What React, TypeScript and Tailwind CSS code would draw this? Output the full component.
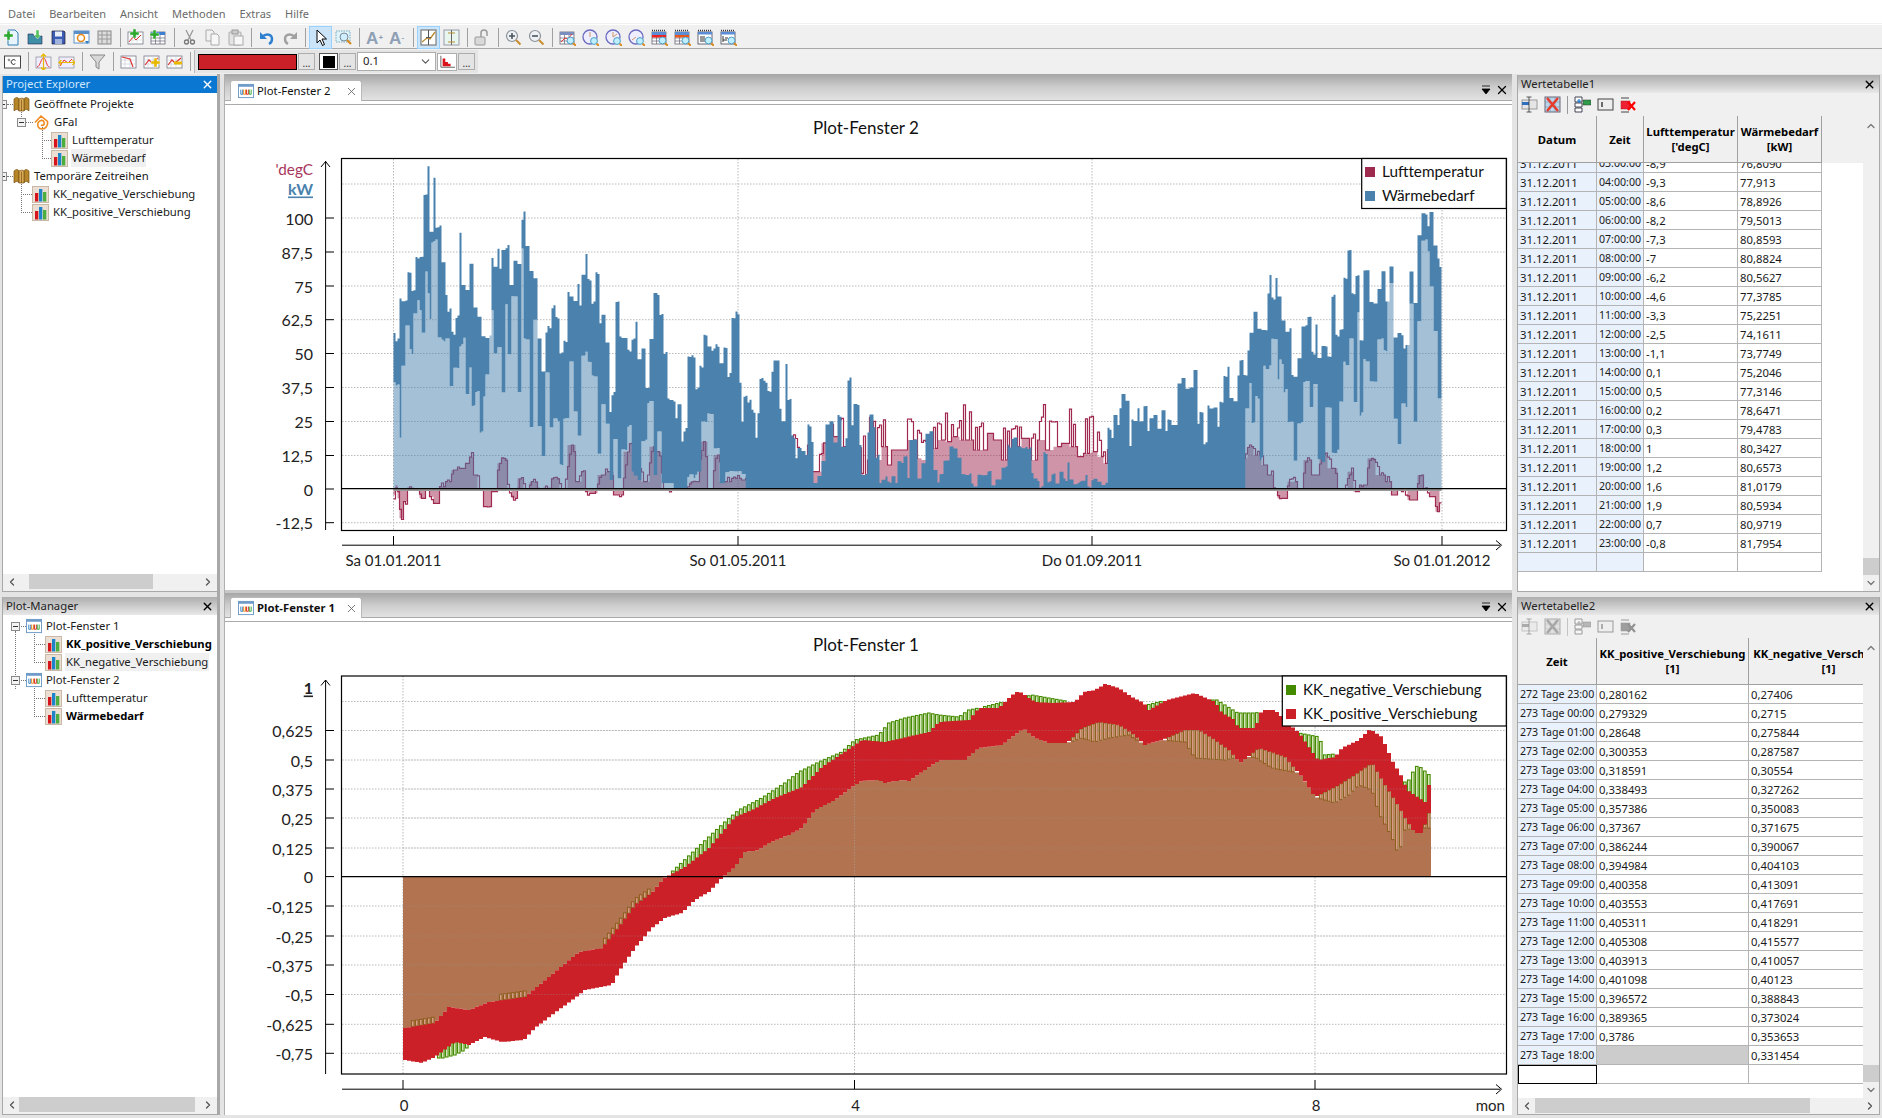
import React from "react";
import { ChevronUp, ChevronDown, ChevronLeft, ChevronRight, X } from "lucide-react";

/* ---------- chart data helpers ---------- */
const interp = (p: number[], x: number) => {
  if (x <= p[0]) return p[1];
  for (let i = 2; i < p.length; i += 2) {
    if (x <= p[i]) {
      const t = (x - p[i - 2]) / (p[i] - p[i - 2] || 1);
      return p[i - 1] + t * (p[i + 1] - p[i - 1]);
    }
  }
  return p[p.length - 1];
};
const nearest = (p: number[], x: number) => {
  if (x <= p[0]) return p[1];
  for (let i = 2; i < p.length; i += 2) {
    if (x <= p[i]) return x - p[i - 2] < p[i] - x ? p[i - 1] : p[i + 1];
  }
  return p[p.length - 1];
};
const rnd = (i: number) => {
  const s = Math.sin(i * 127.1 + 311.7) * 43758.5453;
  return s - Math.floor(s);
};
const zm = (z: number[], ox: number, oy: number) => z.map((v, i) => (i % 2 === 0 ? ox + v / 3 : oy + v / 3));
const join = (...segs: number[][]) => {
  const out: number[] = [];
  let last = -Infinity;
  segs.forEach((s) => {
    for (let i = 0; i < s.length; i += 2) {
      if (s[i] > last) {
        out.push(s[i], s[i + 1]);
        last = s[i];
      }
    }
  });
  return out;
};
const stepLine = (xs: number[], ys: number[], w: number) => {
  let d = `M${xs[0]} ${ys[0].toFixed(1)}`;
  xs.forEach((x, i) => {
    d += `V${ys[i].toFixed(1)}H${x + w}`;
  });
  return d;
};
const stepFill = (xs: number[], ys: number[], w: number, base: number) =>
  `M${xs[0]} ${base}` + stepLine(xs, ys, w).replace(/^M[^V]*/, "") + `V${base}Z`;
const stepBand = (xs: number[], a: number[], b: number[], w: number) => {
  let d = `M${xs[0]} ${a[0].toFixed(1)}`;
  xs.forEach((x, i) => {
    d += `V${a[i].toFixed(1)}H${x + w}`;
  });
  for (let i = xs.length - 1; i >= 0; i--) {
    d += `V${b[i].toFixed(1)}H${xs[i]}`;
  }
  return d + "Z";
};

/* ---------- Plot-Fenster 2 data ---------- */
const BASE2 = 488.7;
const top7 = [430,605,440,630,455,510,470,510,477,425,490,480,500,380,520,375,525,190,535,105,545,300,555,140,562,290,570,285,580,400,590,490,600,540,610,610,625,560,632,312,640,470,655,475,665,405,672,530,690,565,700,620,720,620,727,387,735,410,745,355,750,415,765,360,778,350,785,470,795,395,810,400,817,275,822,250,832,350,845,420,860,450,870,620,885,730,890,610,900,590,915,530,920,565,935,670,945,635,955,485,965,500,975,510,985,460,990,525,1000,435,1010,375,1020,450,1030,520,1042,432,1050,580,1060,560,1075,640,1080,840,1090,790,1105,520,1110,625,1125,625,1135,660,1150,625,1158,575,1165,685,1180,660,1195,770,1205,625,1215,487,1225,490,1235,550,1250,670,1260,810,1270,810,1280,860,1290,820,1295,930,1305,900,1315,685,1330,680,1340,775,1355,710,1365,612,1375,645,1390,658,1400,645,1415,695,1425,648,1440,735,1450,570,1462,550,1470,755,1480,870];
const top11 = [15,105,30,125,40,155,50,230,55,160,65,57,80,65,90,90,95,30,105,0,115,5,120,150,125,220,130,180,140,12,150,120,155,230,165,230,170,290,180,268,190,270,200,290,210,198,220,245,225,370,240,350,250,305,260,190,275,183,285,250,295,170,305,175,310,265,320,230,330,57,335,200,345,132,355,135,360,255,365,345,380,345,385,220,395,165,405,198,412,290,420,375,430,355,450,370,460,350,470,370,480,305,500,285,505,350,515,240,530,235,535,350,550,310,565,225,575,210,585,325,595,370,605,345,620,305,640,265,665,290,670,345,690,345,700,375,720,350,735,345,750,335,755,378,775,360,795,325,810,260,825,235,835,262,855,262,870,268,875,345,890,360,905,382,915,280,925,365,940,345,950,375,965,340,975,360,985,305,995,360,1010,370,1030,365,1040,345,1050,380,1060,358,1080,370,1100,370,1105,205,1120,230,1125,165,1135,200,1145,150,1150,108,1165,120,1170,260,1185,180,1195,145,1205,185,1220,140,1225,215,1235,170,1250,165];
const top8 = [0,905,10,860,25,895,40,840,50,900,60,865,75,880,85,760,100,745,110,780,125,770,135,720,145,880,155,845,165,940,180,830,200,835,205,890,215,815,225,735,235,705,245,800,255,810,265,740,275,695,285,740,295,665,305,605,318,550,325,600,335,600,350,600,355,490,362,438,372,505,378,440,390,495,400,570,415,610,425,600,430,740,450,680,462,590,480,565,490,670,500,580,510,680,525,650,540,680,550,500,562,620,575,600,585,445,600,360,610,490,622,435,635,630,650,420,665,520,680,515,690,480,700,420,710,520,722,405,735,620,750,610,770,650,785,430,795,520,805,315,825,255,835,290,845,250,855,350,865,390,875,415,880,415];
const bot7 = [430,760,445,770,450,930,460,705,472,590,480,660,490,675,497,550,505,515,515,545,520,615,530,425,538,490,545,570,550,340,562,335,567,625,590,630,605,765,620,710,632,645,645,625,652,795,665,710,670,825,680,785,695,910,705,805,713,740,725,535,735,670,750,655,760,780,770,530,780,680,795,505,810,780,817,360,830,630,845,890,855,570,865,885,880,975,890,720,905,890,920,870,935,1000,950,860,965,700,975,850,990,915,1005,670,1020,700,1030,740,1050,965,1060,830,1075,880,1085,1050,1095,930,1105,1040,1120,960,1140,890,1150,1030,1170,1050,1185,930,1205,820,1215,1040,1230,910,1240,1060,1300,1075,1320,1040,1355,1030,1360,880,1385,855,1400,950,1415,1060,1440,1030,1470,1030];
const bot8 = [0,1077,280,1077,295,830,305,760,310,880,325,800,335,985,350,710,375,630,385,755,395,695,410,780,420,880,437,1000,447,880,470,760,485,830,500,760,510,990,520,990,535,830,560,965,575,820,590,700,605,630,615,810,625,540,635,850,650,690,670,750,690,630,710,665,720,455,740,865,750,945,765,825,785,520,800,870,810,580,825,325,835,360,845,470,860,600,870,805,880,440];
const red7 = [430,1110,440,1050,445,1120,455,1180,465,1130,480,1060,500,1085,520,1120,530,1070,545,1115,560,1135,575,1055,600,1040,610,1005,640,1000,650,985,667,965,680,1020,690,1080,715,1145,735,1100,745,985,765,970,775,1090,795,1120,810,1030,830,1080,850,1040,870,1090,890,1060,915,1030,940,1085,965,930,985,1040,1000,1010,1010,1100,1030,1105,1055,1020,1075,1010,1110,1110,1135,950,1145,925,1160,1000,1190,1040,1210,935,1225,950,1240,1070,1260,1090,1300,1080,1340,1040,1360,920,1380,1090,1400,960,1420,1040,1470,1030];
const red11 = [15,345,30,372,60,365,90,305,105,375,118,200,130,180,155,205,170,240,185,320,205,245,225,285,245,275,255,215,290,165,305,175,315,250,325,200,365,265,378,170,395,170,415,200,430,170,440,245,450,270,465,215,480,185,490,165,515,180,525,205,535,205,545,240,555,240,585,185,605,195,620,140,635,195,655,195,670,128,680,115,695,175,710,210,730,180,750,150,775,180,800,210,815,200,830,195,850,200,860,200,875,230,885,200,905,165,915,105,925,180,945,180,965,200,975,165,990,145,1005,210,1030,170,1060,160,1075,220,1095,290,1104,255,1110,380,1130,380,1145,365,1150,380,1195,360,1200,380,1220,375,1250,372];
const val11 = [15,350,60,370,90,330,110,378,130,330,150,380,180,330,225,335,240,335,255,250,290,230,310,260,325,275,365,340,375,350,385,300,415,300,430,260,450,315,465,270,490,270,520,240,535,295,555,300,585,265,605,240,625,245,650,230,670,240,690,240,710,270,740,270,750,220,775,240,800,300,830,260,860,235,880,300,900,240,935,270,950,260,975,250,1000,260,1020,290,1045,280,1060,275,1085,290,1100,310,1106,382];
const red8 = [0,1065,55,1045,70,1070,90,1000,120,975,150,970,175,1040,215,1035,240,985,260,1040,285,970,300,935,320,960,345,990,365,1020,372,1085,395,1120,405,1120,415,1040,440,1040,450,1090,470,975,500,1020,520,960,550,1000,575,1095,605,1010,620,1100,640,1050,665,970,690,1020,720,1040,735,1110,755,1085,790,1125,810,1020,830,1085,850,1115,865,1160,875,1065];

const xs2 = Array.from({ length: 524 }, (_, i) => 393.5 + i * 2);
const topP = join(zm(top7, 250, 130), zm(top11, 740, 360), zm(top8, 1150, 130));
const botP = join(zm(bot7, 250, 130), [750, 488.7, 1149, 488.7], zm(bot8, 1150, 130));
const redP = join(zm(red7, 250, 130), zm(red11, 740, 360), zm(red8, 1150, 130));
const valP = zm(val11, 740, 360);

const topY = xs2.map((x, i) => {
  const v = nearest(topP, x + 1) + (rnd(Math.floor(i / 2)) - 0.5) * 4;
  return Math.min(Math.max(v, 164), BASE2 - 1);
});
const botY = xs2.map((x, i) => {
  const raw = nearest(botP, x + 1);
  const v = raw + (raw < 480 ? (rnd(Math.floor(i / 2) + 900) - 0.5) * 5 : 0);
  return Math.min(Math.max(v, topY[i]), BASE2);
});
const valY = xs2.map((x) => {
  if (x > 745 && x < 1108) return nearest(valP, x + 1);
  const y = nearest(redP, x + 1);
  return y + (y < BASE2 ? 1 : -1) * Math.min(Math.abs(y - BASE2), 5);
});
const spikeY = xs2.map((x, i) => {
  const y = interp(redP, x);
  return rnd(i + 7) > 0.58 ? y + (y < BASE2 ? 1 : -1) * rnd(i + 50) * Math.min(3, Math.abs(y - BASE2)) : Math.max(valY[i], y < BASE2 ? y : -Infinity);
});

const pathRedFill = stepFill(xs2, valY, 2, BASE2);
const pathRedLine = stepLine(xs2, spikeY, 2);
const pathLight = stepFill(xs2, botY, 2, BASE2);
const pathDark = stepBand(xs2, topY, botY, 2);

/* ---------- Plot-Fenster 1 data ---------- */
const BASE1 = 876.6;
const upper = [403,1028,433,1023,447,1007,467,1010,487,1002,523,997,553,972,577,952,600,948,620,923,633,905,650,893,662,878,683,867,707,848,733,817,750,810,773,798,800,787,820,767,853,745,860,740,883,742,927,732,937,722,967,720,977,708,997,708,1010,695,1017,691,1033,702,1050,703,1073,702,1082,692,1093,690,1103,684,1117,688,1130,697,1142,703,1147,710,1165,700,1193,693,1213,702,1220,713,1233,720,1236,728,1253,728,1260,710,1273,710,1283,720,1297,733,1316,760,1333,757,1340,748,1357,740,1368,729,1380,737,1390,760,1400,777,1405,790,1423,802,1427,785,1431,788];
const lower = [403,1060,420,1063,433,1057,445,1048,453,1042,467,1045,483,1037,500,1042,522,1040,533,1028,550,1015,577,995,583,990,610,985,618,970,633,948,650,928,663,918,680,913,693,900,707,892,720,878,733,867,743,852,757,850,767,843,787,835,800,828,813,810,833,800,853,785,860,781,877,780,883,783,900,780,907,781,933,763,940,760,963,760,977,748,1000,745,1017,732,1022,729,1033,738,1047,743,1065,743,1080,728,1097,722,1117,725,1130,733,1143,745,1160,740,1183,730,1197,730,1210,738,1227,750,1238,763,1257,748,1283,757,1300,777,1313,797,1337,785,1357,772,1370,763,1383,785,1397,807,1403,818,1413,833,1420,833,1427,813,1431,800];
const solid = [1050,742,1065,743,1080,738,1093,742,1107,738,1127,735,1143,745,1160,740,1183,742,1193,758,1223,760,1237,757,1253,757,1270,768,1297,773,1313,797,1333,803,1347,795,1357,785,1370,790,1377,813,1390,837,1397,855,1403,830,1413,828,1431,828];
const green = [670,872,707,837,723,822,737,810,760,798,783,783,797,772,817,762,840,752,853,740,877,735,887,723,903,718,927,713,937,715,957,717,967,710,977,708,1030,695,1047,698,1070,702,1082,700,1145,705,1165,700,1215,700,1236,713,1253,713,1260,712,1283,722,1297,733,1318,737,1322,755,1333,754,1345,752,1357,745,1368,735,1395,770,1405,785,1409,775,1416,765,1431,778];

const xs1 = Array.from({ length: 257 }, (_, i) => 403 + i * 4);
const upY = xs1.map((x) => interp(upper, x));
const lowY = xs1.map((x) => interp(lower, x));
const solidY = xs1.map((x, i) => (x >= 1050 ? Math.max(interp(solid, x), lowY[i]) : lowY[i]));
const brownY = xs1.map((x, i) => {
  if (x < 662) return upY[i];
  if (x > 720) return solidY[i];
  return BASE1;
});
const pathRedBand = stepBand(xs1, upY, lowY, 4);
const pathBrown = stepFill(xs1, brownY, 4, BASE1);
const greenBars = xs1
  .map((x, i) => ({ x, t: interp(green, x), b: upY[i] + 1 }))
  .filter((b) => b.x >= 670 && b.b - b.t > 2);
const greenLow = [[417, 1056], [421, 1058], [425, 1054], [437, 1058], [441, 1058], [445, 1057], [449, 1056], [453, 1055], [457, 1053], [461, 1051], [465, 1048]].map(([x, b]) => ({ x, b }));
const hatchBars = xs1
  .map((x, i) => ({ x, t: lowY[i], b: solidY[i] }))
  .filter((b) => b.x >= 1050 && b.b - b.t > 2);
const hatchNeg = xs1
  .map((x, i) => ({ x, b: upY[i] }))
  .filter((b) => (b.x > 410 && b.x < 432) || (b.x > 495 && b.x < 524) || (b.x > 600 && b.x < 648));

/* ---------- chart parts ---------- */
const Dot = ({ x1, y1, x2, y2 }: { x1: number; y1: number; x2: number; y2: number }) => (
  <line x1={x1} y1={y1} x2={x2} y2={y2} stroke="#b9b9b9" strokeWidth="1" strokeDasharray="1.5 1.5" />
);
const YLabel = ({ y, t }: { y: number; t: string }) => (
  <g>
    <text x={313} y={y} textAnchor="end" dominantBaseline="central" fill="#222" className="text-[16px]">
      {t}
    </text>
    <line x1={325.5} x2={334} y1={y} y2={y} stroke="#000" strokeWidth="1" />
  </g>
);

const Chart2 = () => {
  const ticks: [number, string][] = [[218, "100"], [252, "87,5"], [286, "75"], [319.7, "62,5"], [353.5, "50"], [387.5, "37,5"], [421.5, "25"], [455.5, "12,5"], [489, "0"], [522.7, "-12,5"]];
  return (
    <svg viewBox="225 105 1287 485" width="1287" height="485" className="block font-['Lato',sans-serif]">
      <text x={866} y={127} textAnchor="middle" dominantBaseline="central" fill="#111" className="text-[17px]">Plot-Fenster 2</text>
      <text x={313} y={169} textAnchor="end" dominantBaseline="central" fill="#a7355a" className="text-[15.3px]">'degC</text>
      <text x={313} y={188} textAnchor="end" dominantBaseline="central" fill="#4a82ad" className="text-[16px] font-bold underline">kW</text>
      {[184, 218, 252, 286, 319.7, 353.5, 387.5, 421.5, 455.5, 522.7].map((y) => (
        <Dot key={y} x1={342} x2={1506} y1={y} y2={y} />
      ))}
      {[393.5, 738, 1092, 1442].map((x) => (
        <Dot key={x} x1={x} x2={x} y1={159} y2={530} />
      ))}
      <path d={pathRedFill} fill="#a0294f" fillOpacity="0.5" />
      <path d={pathRedLine} fill="none" stroke="#a0294f" strokeWidth="1.2" />
      <path d={pathLight} fill="#4a82ad" fillOpacity="0.5" />
      <path d={pathDark} fill="#4a82ad" />
      <rect x={393.5} y={489} width={1048} height={2} fill="#9a9a9a" />
      <line x1={342} x2={1506} y1={488.7} y2={488.7} stroke="#000" strokeWidth="1.2" />
      <rect x={341.5} y={158.5} width={1165} height={372} fill="none" stroke="#000" strokeWidth="1.2" />
      <line x1={325.6} x2={325.6} y1={161} y2={530} stroke="#000" strokeWidth="1" />
      <path d="M321 167L325.6 161.5L330 167" fill="none" stroke="#000" strokeWidth="1" />
      {ticks.map(([y, t]) => (
        <YLabel key={t} y={y} t={t} />
      ))}
      <line x1={342} x2={1500} y1={545.2} y2={545.2} stroke="#000" strokeWidth="1" />
      <path d="M1496 540.5L1501.5 545.2L1496 550" fill="none" stroke="#000" strokeWidth="1" />
      {[393.5, 738, 1092, 1442].map((x) => (
        <line key={x} x1={x} x2={x} y1={536} y2={545} stroke="#000" strokeWidth="1" />
      ))}
      {([[393.5, "Sa 01.01.2011"], [738, "So 01.05.2011"], [1092, "Do 01.09.2011"], [1442, "So 01.01.2012"]] as [number, string][]).map(([x, t]) => (
        <text key={t} x={x} y={560} textAnchor="middle" dominantBaseline="central" fill="#222" className="text-[15px]">{t}</text>
      ))}
      <rect x={1361.7} y={158.5} width={144.6} height={50} fill="#fff" stroke="#000" strokeWidth="1.2" />
      <rect x={1365} y={167} width={10} height={10} fill="#9e2a4e" />
      <rect x={1365} y={191} width={10} height={10} fill="#4a82ad" />
      <text x={1382} y={170.5} dominantBaseline="central" fill="#111" className="text-[15.3px]">Lufttemperatur</text>
      <text x={1382} y={194.5} dominantBaseline="central" fill="#111" className="text-[15.3px]">Wärmebedarf</text>
    </svg>
  );
};

const Chart1 = () => {
  const ticks: [number, string][] = [[730.5, "0,625"], [760, "0,5"], [789, "0,375"], [818, "0,25"], [848, "0,125"], [876.6, "0"], [906, "-0,125"], [936, "-0,25"], [965, "-0,375"], [994.5, "-0,5"], [1024.3, "-0,625"], [1053.3, "-0,75"]];
  return (
    <svg viewBox="225 622 1287 493" width="1287" height="493" className="block font-['Lato',sans-serif]">
      <text x={866} y={644} textAnchor="middle" dominantBaseline="central" fill="#111" className="text-[17px]">Plot-Fenster 1</text>
      <text x={313} y={687} textAnchor="end" dominantBaseline="central" fill="#222" className="text-[16px] font-bold underline">1</text>
      {[701.5, 730.5, 760, 789, 818, 848, 906, 936, 965, 994.5, 1024.3, 1053.3].map((y) => (
        <Dot key={y} x1={342} x2={1506} y1={y} y2={y} />
      ))}
      {[403, 854.5, 1315].map((x) => (
        <Dot key={x} x1={x} x2={x} y1={676} y2={1074} />
      ))}
      {greenBars.map((b) => (
        <rect key={b.x} x={b.x + 0.5} y={b.t} width={2.6} height={b.b - b.t} fill="#dcebc4" stroke="#458b00" strokeWidth="1.1" />
      ))}
      {greenLow.map((b) => (
        <rect key={b.x} x={b.x + 0.5} y={1040} width={2.6} height={b.b - 1040} fill="#dcebc4" stroke="#458b00" strokeWidth="1.1" />
      ))}
      <path d={pathBrown} fill="#b27350" />
      {hatchBars.map((b) => (
        <rect key={b.x} x={b.x + 0.5} y={b.t} width={2.6} height={b.b - b.t} fill="#dca08c" stroke="#8f5f20" strokeWidth="1.1" />
      ))}
      {hatchNeg.map((b) => (
        <rect key={b.x} x={b.x + 0.5} y={b.b - 6} width={2.6} height={6} fill="#dca08c" stroke="#8f5f20" strokeWidth="1.1" />
      ))}
      <path d={pathRedBand} fill="#cc2029" />
      {[730.5, 760, 789, 818, 848, 906, 936, 965, 994.5].map((y) => (
        <line key={y} x1={403} x2={1431} y1={y} y2={y} stroke="#999" strokeOpacity="0.35" strokeWidth="1" strokeDasharray="1.5 1.5" />
      ))}
      <line x1={854.5} x2={854.5} y1={720} y2={1040} stroke="#aaa" strokeOpacity="0.5" strokeWidth="1" strokeDasharray="1.5 1.5" />
      <line x1={342} x2={1506} y1={876.6} y2={876.6} stroke="#000" strokeWidth="1.2" />
      <rect x={341.5} y={676} width={1165} height={398} fill="none" stroke="#000" strokeWidth="1.2" />
      <line x1={325.6} x2={325.6} y1={680} y2={1074} stroke="#000" strokeWidth="1" />
      <path d="M321 685.5L325.6 680L330 685.5" fill="none" stroke="#000" strokeWidth="1" />
      {ticks.map(([y, t]) => (
        <YLabel key={t} y={y} t={t} />
      ))}
      <line x1={342} x2={1500} y1={1089.2} y2={1089.2} stroke="#000" strokeWidth="1" />
      <path d="M1496 1084.5L1501.5 1089.2L1496 1094" fill="none" stroke="#000" strokeWidth="1" />
      {([[403, "0"], [854.5, "4"], [1315, "8"]] as [number, string][]).map(([x, t]) => (
        <g key={t}>
          <line x1={x} x2={x} y1={1080} y2={1089} stroke="#000" strokeWidth="1" />
          <text x={x + 1} y={1105} textAnchor="middle" dominantBaseline="central" fill="#222" className="text-[15px]">{t}</text>
        </g>
      ))}
      <text x={1505} y={1105} textAnchor="end" dominantBaseline="central" fill="#222" className="text-[15px]">mon</text>
      <rect x={1282.3} y={676} width={224} height={50} fill="#fff" stroke="#000" strokeWidth="1.2" />
      <rect x={1286} y={685} width={10} height={10} fill="#458b00" />
      <rect x={1286} y={709} width={10} height={10} fill="#cc2029" />
      <text x={1303} y={688.5} dominantBaseline="central" fill="#111" className="text-[15px]">KK_negative_Verschiebung</text>
      <text x={1303} y={712.5} dominantBaseline="central" fill="#111" className="text-[15px]">KK_positive_Verschiebung</text>
    </svg>
  );
};

/* ---------- icons ---------- */
const Mag = ({ x = 8, y = 8 }: { x?: number; y?: number }) => (
  <g transform={`translate(${x} ${y})`}>
    <circle cx="4" cy="4" r="3.4" fill="#bfefff" stroke="#4f9fc8" strokeWidth="1" />
    <path d="M6.6 6.6L9.4 9.4" stroke="#d98a1e" strokeWidth="2" />
  </g>
);
const Plus = ({ x = 0, y = 0, c = "#2fa82f" }: { x?: number; y?: number; c?: string }) => (
  <path transform={`translate(${x} ${y})`} d="M3 0h3v3h3v3H6v3H3V6H0V3h3z" fill={c} stroke="#fff" strokeWidth="0.4" />
);
const Grid = ({ head = "#6f93c9" }: { head?: string }) => (
  <g>
    <rect x="1" y="3" width="14" height="12" fill="#fff" stroke="#667" strokeWidth="0.8" />
    <rect x="1" y="3" width="14" height="3" fill={head} />
    <path d="M1 9h14M1 12h14M5.5 6v9M10 6v9" stroke="#667" strokeWidth="0.7" />
  </g>
);
const Clock = ({ mark }: { mark: string }) => (
  <g>
    <circle cx="8" cy="8" r="7" fill="#eef" stroke="#6a6ac0" strokeWidth="1.3" />
    <path d={mark} stroke="#c96" strokeWidth="1" fill="none" />
    <Mag x={8} y={8} />
  </g>
);
const Cal = ({ band }: { band?: string }) => (
  <g>
    <path d="M1 1.5h14" stroke="#333" strokeWidth="1.5" strokeDasharray="1 1" />
    <Grid head="#5b8cd6" />
    {band && <rect x="1" y="6" width="14" height="2.5" fill={band} />}
    <Mag x={7.5} y={7.5} />
  </g>
);
const icons: Record<string, React.ReactNode> = {
  newdoc: (<g><path d="M4 1h7l3 3v12H4z" fill="#e8f4fb" stroke="#2f7fb3" /><Plus x={0} y={2} /></g>),
  open: (<g><path d="M1 5h5l1 2h8v8H1z" fill="#3f8ea8" stroke="#225" strokeWidth="0.6" /><path d="M9 1v5h-2l3.5 4L14 6h-2V1z" fill="#55c05a" stroke="#fff" strokeWidth="0.4" /></g>),
  save: (<g><path d="M2 2h12l1 1v12H2z" fill="#3b5bb5" stroke="#223" strokeWidth="0.7" /><rect x="5" y="2.5" width="7" height="5" fill="#e8eef8" /><rect x="5" y="10" width="7" height="5" fill="#9fb3dc" /></g>),
  mail: (<g><rect x="1" y="2" width="15" height="12" fill="#fff" stroke="#5a8fc8" /><rect x="1" y="2" width="15" height="3" fill="#5a8fc8" /><circle cx="8" cy="9" r="3.5" fill="none" stroke="#e98a18" strokeWidth="1.6" /><path d="M12 12h4l-2 3z" fill="#2f7fc0" /></g>),
  gray: (<g><rect x="2" y="2" width="13" height="13" fill="#ddd" stroke="#888" /><path d="M2 6h13M2 10h13M6 2v13M11 2v13" stroke="#999" /></g>),
  addchart: (<g><rect x="1" y="3" width="15" height="12" fill="#fff" stroke="#778" strokeWidth="0.8" /><path d="M1 7h15M1 11h15M5 3v12M10 3v12" stroke="#cdd" strokeWidth="0.7" /><path d="M2 13l4-5 3 3 5-5" stroke="#d33" fill="none" /><Plus x={3} y={0} /></g>),
  addtable: (<g><Grid head="#3d7ed0" /><Plus x={0} y={1} /></g>),
  cut: (<g><path d="M5 1l5 10M12 1L7 11" stroke="#999" strokeWidth="1.3" /><circle cx="5.5" cy="13" r="2" fill="none" stroke="#777" strokeWidth="1.3" /><circle cx="11.5" cy="13" r="2" fill="none" stroke="#777" strokeWidth="1.3" /></g>),
  copy: (<g><path d="M2 1h6l2 2v9H2z" fill="#f2f2f2" stroke="#aaa" /><path d="M7 5h6l2 2v9H7z" fill="#f7f7f7" stroke="#aaa" /></g>),
  paste: (<g><rect x="2" y="3" width="12" height="13" rx="1" fill="#e4e4e4" stroke="#aaa" /><rect x="5" y="1" width="6" height="4" fill="#ccc" stroke="#999" /><rect x="7" y="7" width="9" height="9" fill="#f7f7f7" stroke="#aaa" /></g>),
  undo: (<g><path d="M5 7c5-3 9-1 9 3 0 2-1 4-3 5" fill="none" stroke="#2f7fd0" strokeWidth="2.4" /><path d="M2 3v7h7z" fill="#2f7fd0" /></g>),
  redo: (<g><path d="M13 7C8 4 4 6 4 10c0 2 1 4 3 5" fill="none" stroke="#a0a0a0" strokeWidth="2.4" /><path d="M16 3v7H9z" fill="#a0a0a0" /></g>),
  cursor: (<path d="M5 1v13l3-3 2.5 5.5 2-1L10 10h4.5z" fill="#fff" stroke="#000" strokeWidth="1" />),
  zoomrect: (<g><rect x="1" y="2" width="14" height="11" fill="#dff3fb" stroke="#7ab" strokeDasharray="1.5 1" /><circle cx="9" cy="8" r="4" fill="#cfefff" stroke="#7a8a99" /><path d="M12 11l4 4" stroke="#d98a1e" strokeWidth="2.2" /></g>),
  aplus: (<g><text x="0" y="15" fill="#8ea0b5" className="font-['Liberation_Sans',sans-serif] text-[17px] font-bold">A</text><text x="12.5" y="11" fill="#8ea0b5" className="font-['Liberation_Sans',sans-serif] text-[8px] font-bold">+</text></g>),
  aminus: (<g><text x="0" y="15" fill="#8ea0b5" className="font-['Liberation_Sans',sans-serif] text-[17px] font-bold">A</text><text x="12.5" y="11" fill="#8ea0b5" className="font-['Liberation_Sans',sans-serif] text-[8px] font-bold">-</text></g>),
  plotA: (<g><rect x="1" y="1" width="15" height="15" fill="#fff" stroke="#666" /><path d="M8.5 1v15" stroke="#555" /><path d="M2 13l5-4 3 1 5-7" stroke="#b98a30" strokeWidth="1.3" fill="none" /><path d="M6 8.5h5" stroke="#555" /></g>),
  plotB: (<g><rect x="1" y="1" width="15" height="15" fill="#e8f6f0" stroke="#99a" /><path d="M8.5 1v15" stroke="#666" /><path d="M5 4h7M5 13h7" stroke="#b98a30" strokeWidth="1.2" /></g>),
  lock: (<g><rect x="1" y="8" width="10" height="8" rx="1" fill="#d9d9d9" stroke="#999" /><path d="M7 8V4a3 3 0 016 0v3" fill="none" stroke="#999" strokeWidth="1.5" /></g>),
  zoomin: (<g><circle cx="7" cy="7" r="5.5" fill="#eef2f4" stroke="#8a9299" strokeWidth="1.2" /><path d="M4 7h6M7 4v6" stroke="#4a5560" strokeWidth="1.6" /><path d="M11 11l4.5 4.5" stroke="#c98d2e" strokeWidth="2" /></g>),
  zoomout: (<g><circle cx="7" cy="7" r="5.5" fill="#eef2f4" stroke="#8a9299" strokeWidth="1.2" /><path d="M4 7h6" stroke="#4a5560" strokeWidth="1.6" /><path d="M11 11l4.5 4.5" stroke="#c98d2e" strokeWidth="2" /></g>),
  chartzoom: (<g><Grid head="#7a8fc0" /><path d="M2 13l4-4 3 1 4-5" stroke="#e33" fill="none" /><Mag x={7.5} y={7.5} /></g>),
  clock1: <Clock mark="M8 3v5" />,
  clock2: <Clock mark="M8 3v5l4-3" />,
  clock3: <Clock mark="M8 8L4 11" />,
  cal1: <Cal band="#e22" />,
  cal2: <Cal band="#e8551a" />,
  cal3: (<g><path d="M1 1.5h14" stroke="#333" strokeWidth="1.5" strokeDasharray="1 1" /><rect x="1" y="3" width="14" height="12" fill="#fff" stroke="#445" strokeWidth="0.8" /><rect x="1" y="3" width="14" height="2.5" fill="#5b8cd6" /><path d="M3 8h5M3 10h5M3 12h5" stroke="#333" /><Mag x={7.5} y={7.5} /></g>),
  cal4: (<g><path d="M1 1.5h14" stroke="#333" strokeWidth="1.5" strokeDasharray="1 1" /><rect x="1" y="3" width="14" height="12" fill="#fff" stroke="#445" strokeWidth="0.8" /><rect x="1" y="3" width="14" height="2.5" fill="#5b8cd6" /><path d="M3 7v6M5 9h3M3 11h4" stroke="#333" /><Mag x={7.5} y={7.5} /></g>),
  unit: (<g><rect x="0.5" y="3" width="16" height="12" fill="#fff" stroke="#444" /><circle cx="5" cy="7" r="0.9" fill="none" stroke="#333" strokeWidth="0.6" /><path d="M11.5 7.5a2.4 2.4 0 10-.2 3.2" fill="none" stroke="#333" /></g>),
  peakY: (<g><rect x="1" y="4" width="15" height="11" fill="#eef" stroke="#889" strokeWidth="0.7" /><path d="M2 14c3 0 4-9 6.5-9s3 9 6 9" stroke="#e33" fill="none" /><path d="M8.5 1v16M6 3.5l2.5-2.5L11 3.5M6 14.5L8.5 17l2.5-2.5" stroke="#e8b800" strokeWidth="1.2" fill="none" /></g>),
  peakX: (<g><rect x="1" y="4" width="15" height="11" fill="#eef" stroke="#889" strokeWidth="0.7" /><path d="M2 13l4-6 4 3 4-4" stroke="#e33" fill="none" /><path d="M1 9.5h16M3.5 7L1 9.5 3.5 12M14.5 7L17 9.5 14.5 12" stroke="#e8b800" strokeWidth="1.2" fill="none" /></g>),
  filter: (<path d="M1 2h15l-6 7v7l-3-2V9z" fill="#d8d8d8" stroke="#888" />),
  decline: (<g><rect x="1" y="3" width="15" height="12" fill="#fff" stroke="#778" strokeWidth="0.8" /><path d="M1 7h15M1 11h15M5 3v12M10 3v12" stroke="#c5d0dc" strokeWidth="0.7" /><path d="M2 4l8 2 3 8" stroke="#d33" fill="none" strokeWidth="1.2" /></g>),
  chartAdd: (<g><rect x="1" y="3" width="15" height="12" fill="#fff" stroke="#778" strokeWidth="0.8" /><path d="M1 7h15M1 11h15M5 3v12M10 3v12" stroke="#c5d0dc" strokeWidth="0.7" /><path d="M2 12l4-5 3 3 6-5" stroke="#d33" fill="none" strokeWidth="1.2" /><Plus x={8} y={5} c="#e8b800" /></g>),
  chartDel: (<g><rect x="1" y="3" width="15" height="12" fill="#fff" stroke="#778" strokeWidth="0.8" /><path d="M1 7h15M1 11h15M5 3v12M10 3v12" stroke="#c5d0dc" strokeWidth="0.7" /><path d="M2 12l4-5 3 3 6-5" stroke="#d33" fill="none" strokeWidth="1.2" /><path d="M8 10h8" stroke="#e8b800" strokeWidth="3" /></g>),
  bars: (<g><path d="M1 2v13h16" stroke="#555" fill="none" strokeWidth="1" /><path d="M3 14v-9h3v4h3v2h3v3z" fill="#d8131b" /></g>),
  tCols: (<g><rect x="1" y="4" width="15" height="9" fill="#e5e5e5" stroke="#999" /><rect x="1" y="6" width="7" height="3" fill="#2f6fc0" /><path d="M8 1v15M5.5 1h5M5.5 16h5" stroke="#333" strokeWidth="0.8" /></g>),
  tDel: (<g><rect x="1" y="1" width="15" height="15" fill="#bcd5ea" stroke="#667" /><path d="M6 1v15M11 1v15M1 6h15M1 11h15" stroke="#7890a8" strokeWidth="0.6" /><path d="M3 2l11 13M14 2L3 15" stroke="#e83a2a" strokeWidth="2.4" /></g>),
  tRows: (<g><path d="M1 1h7v5H1zM1 7h7v4H1zM1 12h7v4H1z" fill="#fff" stroke="#445" /><rect x="9" y="4" width="8" height="5" fill="#2f9a4a" stroke="#333" strokeWidth="0.5" /><path d="M3 5h4M5 3v4" stroke="#1f7fd8" strokeWidth="1.2" /></g>),
  tBox: (<g><rect x="1" y="3" width="15" height="11" fill="#eee" stroke="#444" /><path d="M5 6v5" stroke="#222" strokeWidth="1.3" /></g>),
  tX: (<g><path d="M1 2h8M1 16h8" stroke="#444" /><rect x="1" y="5" width="9" height="8" fill="#e23" stroke="#a22" strokeWidth="0.5" /><path d="M8 6l7 8M15 6l-7 8" stroke="#f00" strokeWidth="2.2" /></g>),
};
const Ico = ({ n, s = 17, className = "" }: { n: string; s?: number; className?: string }) => (
  <svg viewBox="0 0 17 17" width={s} height={s} className={`shrink-0 ${className}`}>{icons[n]}</svg>
);

/* tree icons */
const Book = () => (
  <svg viewBox="0 0 17 17" width="17" height="17" className="shrink-0">
    <path d="M1 3c2-2 4-2 5 0v12c-1-2-3-2-5 0z" fill="#b5852a" stroke="#7a5214" strokeWidth="0.7" />
    <path d="M16 3c-2-2-4-2-5 0v12c1-2 3-2 5 0z" fill="#b5852a" stroke="#7a5214" strokeWidth="0.7" />
    <path d="M6 3c1-1 4-1 5 0v12H6z" fill="#d9aa55" stroke="#7a5214" strokeWidth="0.7" />
    <path d="M8.5 4v11" stroke="#7a5214" strokeWidth="0.7" />
  </svg>
);
const Gfal = () => (
  <svg viewBox="0 0 17 17" width="17" height="17" className="shrink-0">
    <path d="M2 8.5L8 2l6.5 5.5c1 4-2 7.5-5.5 7.5S4 12 5 9s5-3.5 6-1-1 4-3 3" fill="none" stroke="#ee8a20" strokeWidth="1.6" />
  </svg>
);
const Series = () => (
  <svg viewBox="0 0 17 17" width="17" height="17" className="shrink-0">
    <rect x="0.5" y="0.5" width="16" height="16" fill="#eadfd2" stroke="#c9b8a6" />
    <rect x="3" y="7" width="3.3" height="8.5" fill="#d5141c" />
    <rect x="7" y="3" width="3.3" height="12.5" fill="#1d84c9" />
    <rect x="11" y="6" width="3.3" height="9.5" fill="#4cae3c" />
  </svg>
);
const PlotIco = () => (
  <svg viewBox="0 0 17 17" width="16" height="16" className="shrink-0">
    <rect x="0.5" y="1.5" width="16" height="14" fill="#fff" stroke="#6d9ac8" />
    <rect x="0.5" y="1.5" width="16" height="2.5" fill="#6d9ac8" />
    <path d="M3 7v5h2V7" stroke="#2f7fc0" fill="none" />
    <path d="M6 7v5h2V7" stroke="#e8881c" fill="none" />
    <path d="M9 7v5h2V7" stroke="#d22" fill="none" />
    <path d="M12 7v5h2V7" stroke="#3a3" fill="none" />
  </svg>
);

/* ---------- toolbars ---------- */
const Sep = () => (
  <div className="w-[8px] h-[19px] flex justify-center shrink-0">
    <div className="w-px h-full bg-[#a0a0a0]" />
  </div>
);
const Tool = ({ n, sel }: { n: string; sel?: boolean }) => (
  <div className={`w-[23px] h-[23px] shrink-0 flex items-center justify-center ${sel ? "bg-[#cce4f7] border border-[#99d1ff]" : ""}`}>
    <Ico n={n} />
  </div>
);
const row1: (string | null)[] = ["newdoc", "open", "save", "mail", "gray", null, "addchart", "addtable", null, "cut", "copy", "paste", null, "undo", "redo", null, "cursor*", "zoomrect", null, "aplus", "aminus", null, "plotA*", "plotB", null, "lock", null, "zoomin", "zoomout", null, "chartzoom", "clock1", "clock2", "clock3", "cal1", "cal2", "cal3", "cal4"];
const row2: (string | null)[] = ["unit", null, "peakY", "peakX", null, "filter", null, "decline", "chartAdd", "chartDel", null];
const ToolRow = ({ items }: { items: (string | null)[] }) => (
  <>
    {items.map((t, i) =>
      t === null ? <Sep key={i} /> : <Tool key={i} n={t.replace("*", "")} sel={t.endsWith("*")} />
    )}
  </>
);
const Dots = () => (
  <div className="w-[17px] h-[17px] bg-[#e4e4e4] border border-[#adadad] flex items-end justify-center text-[10px] leading-[12px] text-[#333] shrink-0">...</div>
);

const TableTools = ({ muted }: { muted?: boolean }) => (
  <div className={`h-[23px] flex items-center gap-[6px] pl-[3px] ${muted ? "grayscale opacity-50" : ""}`}>
    <Ico n="tCols" />
    <Ico n="tDel" />
    <div className="w-px h-[18px] bg-[#999]" />
    <Ico n="tRows" />
    <Ico n="tBox" />
    <Ico n="tX" />
  </div>
);

/* ---------- panels ---------- */
const PanelHead = ({ title, blue }: { title: string; blue?: boolean }) => (
  <div className={`shrink-0 flex items-center justify-between pl-[3px] pr-[3px] text-[11.3px] ${blue ? "h-[17px] bg-[#0a78d2] text-[#cfe6fb]" : "h-[18px] bg-gradient-to-b from-[#aeaeae] to-[#e8e8e8] text-[#222]"}`}>
    <span>{title}</span>
    <X size={13} strokeWidth={2.6} className={blue ? "text-white" : "text-black"} />
  </div>
);
const HScroll = ({ thumb }: { thumb: string }) => (
  <div className="h-[15px] shrink-0 bg-[#f0f0f0] flex items-center justify-between relative px-[3px]">
    <ChevronLeft size={12} strokeWidth={2.6} className="text-[#555]" />
    <div className={`absolute top-0 bottom-0 bg-[#cdcdcd] ${thumb}`} />
    <ChevronRight size={12} strokeWidth={2.6} className="text-[#555]" />
  </div>
);
const VScroll = () => (
  <div className="w-[16px] shrink-0 bg-[#f0f0f0] flex flex-col items-center pt-[4px] pb-[2px]">
    <ChevronUp size={12} strokeWidth={2.6} className="text-[#777]" />
    <div className="flex-1" />
    <div className="w-full h-[17px] bg-[#cdcdcd]" />
    <ChevronDown size={12} strokeWidth={2.6} className="mt-[2px] text-[#777]" />
  </div>
);

type RowP = {
  pad: string;
  icon: React.ReactNode;
  text: string;
  bold?: boolean;
  hl?: boolean;
  lines?: string[];
  exp?: string;
};
const TreeRow = ({ pad, icon, text, bold, hl, lines = [], exp }: RowP) => (
  <div className={`relative h-[18px] flex items-center ${pad}`}>
    {lines.map((l, i) => (
      <div key={i} className={`absolute border-dotted border-[#777] ${l}`} />
    ))}
    {exp && (
      <div className={`absolute top-[5px] w-[9px] h-[9px] border border-[#8a8a8a] bg-[#f3f3f3] flex items-center justify-center ${exp}`}>
        <div className="w-[5px] h-px bg-[#333]" />
      </div>
    )}
    <span className="relative">{icon}</span>
    <span className={`relative ml-[3px] px-[1px] h-[18px] leading-[18px] whitespace-nowrap ${bold ? "font-bold text-black" : ""} ${hl ? "bg-[#f0f0f0]" : ""}`}>{text}</span>
  </div>
);

const H = "border-t top-[9px]";
const V = "border-l";

const PlotTabs = ({ title, bold, tall }: { title: string; bold?: boolean; tall?: boolean }) => (
  <div className="shrink-0 flex flex-col">
    <div className={`${tall ? "h-[27px]" : "h-[25px]"} bg-gradient-to-b from-[#a6a6a6] via-[#cccccc] to-[#e2e2e2] border-b border-[#aaa] flex items-end pl-[5px] pr-[3px] justify-between`}>
      <div className="w-[132px] h-[21px] -mb-px bg-white border border-b-0 border-[#b8b8b8] rounded-t-[3px] flex items-center pl-[7px] pr-[3px]">
        <PlotIco />
        <span className={`ml-[3px] text-[11.3px] text-[#111] flex-1 ${bold ? "font-bold" : ""}`}>{title}</span>
        <X size={13} strokeWidth={1.6} className="text-[#666]" />
      </div>
      <div className="flex items-center gap-[4px] pb-[3px]">
        <svg width="10" height="10" viewBox="0 0 10 10"><path d="M1 1h8M1 4h8L5 9z" fill="#000" stroke="#000" strokeWidth="0.8" /></svg>
        <X size={14} strokeWidth={2.2} className="text-black" />
      </div>
    </div>
    <div className="h-[4px] bg-white border-b border-[#aaa]" />
  </div>
);

/* ---------- tables ---------- */
const HeadCell = ({ w, a, b }: { w: string; a: string; b?: string }) => (
  <div className={`${w} shrink-0 h-full border-r border-b border-[#a0a0a0] bg-[#f0f0f0] flex flex-col items-center justify-center font-bold text-black text-[11.3px] leading-[15px] whitespace-nowrap overflow-hidden`}>
    <span>{a}</span>
    {b && <span>{b}</span>}
  </div>
);
const Cell = ({ w, t, head, gray, sel, small }: { w: string; t?: string; head?: boolean; gray?: boolean; sel?: boolean; small?: string }) => (
  <div className={`${w} shrink-0 h-full border-r border-b border-[#b4b4b4] pl-[2px] overflow-hidden whitespace-nowrap leading-[19px] ${small ?? ""} ${head ? "bg-[#e9f1fc]" : gray ? "bg-[#cccccc]" : "bg-white"} ${sel ? "!bg-white border-[1.5px] !border-black" : ""}`}>
    {t}
  </div>
);

const t1Rows: [string, string, string][] = [
  ["04:00:00", "-9,3", "77,913"], ["05:00:00", "-8,6", "78,8926"], ["06:00:00", "-8,2", "79,5013"], ["07:00:00", "-7,3", "80,8593"], ["08:00:00", "-7", "80,8824"],
  ["09:00:00", "-6,2", "80,5627"], ["10:00:00", "-4,6", "77,3785"], ["11:00:00", "-3,3", "75,2251"], ["12:00:00", "-2,5", "74,1611"], ["13:00:00", "-1,1", "73,7749"],
  ["14:00:00", "0,1", "75,2046"], ["15:00:00", "0,5", "77,3146"], ["16:00:00", "0,2", "78,6471"], ["17:00:00", "0,3", "79,4783"], ["18:00:00", "1", "80,3427"],
  ["19:00:00", "1,2", "80,6573"], ["20:00:00", "1,6", "81,0179"], ["21:00:00", "1,9", "80,5934"], ["22:00:00", "0,7", "80,9719"], ["23:00:00", "-0,8", "81,7954"],
];
const t2Rows: [string, string, string][] = [
  ["272 Tage 23:00", "0,280162", "0,27406"], ["273 Tage 00:00", "0,279329", "0,2715"], ["273 Tage 01:00", "0,28648", "0,275844"], ["273 Tage 02:00", "0,300353", "0,287587"],
  ["273 Tage 03:00", "0,318591", "0,30554"], ["273 Tage 04:00", "0,338493", "0,327262"], ["273 Tage 05:00", "0,357386", "0,350083"], ["273 Tage 06:00", "0,37367", "0,371675"],
  ["273 Tage 07:00", "0,386244", "0,390067"], ["273 Tage 08:00", "0,394984", "0,404103"], ["273 Tage 09:00", "0,400358", "0,413091"], ["273 Tage 10:00", "0,403553", "0,417691"],
  ["273 Tage 11:00", "0,405311", "0,418291"], ["273 Tage 12:00", "0,405308", "0,415577"], ["273 Tage 13:00", "0,403913", "0,410057"], ["273 Tage 14:00", "0,401098", "0,40123"],
  ["273 Tage 15:00", "0,396572", "0,388843"], ["273 Tage 16:00", "0,389365", "0,373024"], ["273 Tage 17:00", "0,3786", "0,353653"],
];

const Table1 = () => (
  <div className="flex-1 flex min-h-0">
    <div className="flex-1 overflow-hidden flex flex-col">
      <div className="h-[47px] shrink-0 bg-[#f0f0f0] flex">
        <HeadCell w="w-[79px]" a="Datum" />
        <HeadCell w="w-[47px]" a="Zeit" />
        <HeadCell w="w-[94px]" a="Lufttemperatur" b="['degC]" />
        <HeadCell w="w-[84px]" a="Wärmebedarf" b="[kW]" />
      </div>
      <div className="h-[10px] overflow-hidden flex items-end shrink-0">
        <div className="h-[19px] flex shrink-0">
          <Cell w="w-[79px]" t="31.12.2011" head />
          <Cell w="w-[47px]" t="03:00:00" head small="text-[10.6px]" />
          <Cell w="w-[94px]" t="-8,9" />
          <Cell w="w-[84px]" t="76,8090" />
        </div>
      </div>
      {t1Rows.map((r) => (
        <div key={r[0]} className="h-[19px] flex shrink-0">
          <Cell w="w-[79px]" t="31.12.2011" head />
          <Cell w="w-[47px]" t={r[0]} head small="text-[10.6px]" />
          <Cell w="w-[94px]" t={r[1]} />
          <Cell w="w-[84px]" t={r[2]} />
        </div>
      ))}
      <div className="h-[19px] flex shrink-0">
        <Cell w="w-[79px]" head />
        <Cell w="w-[47px]" head />
        <Cell w="w-[94px]" />
        <Cell w="w-[84px]" />
      </div>
    </div>
    <VScroll />
  </div>
);
const Table2 = () => (
  <div className="flex-1 flex flex-col min-h-0 pb-[1px] bg-[#f0f0f0]">
    <div className="flex-1 flex min-h-0 bg-white">
      <div className="flex-1 overflow-hidden flex flex-col">
        <div className="h-[47px] shrink-0 flex">
          <HeadCell w="w-[79px]" a="Zeit" />
          <HeadCell w="w-[152px]" a="KK_positive_Verschiebung" b="[1]" />
          <HeadCell w="w-[160px]" a="KK_negative_Verschiebung" b="[1]" />
        </div>
        {t2Rows.map((r) => (
          <div key={r[0]} className="h-[19px] flex shrink-0">
            <Cell w="w-[79px]" t={r[0]} head small="text-[10.6px]" />
            <Cell w="w-[152px]" t={r[1]} />
            <Cell w="w-[160px]" t={r[2]} />
          </div>
        ))}
        <div className="h-[19px] flex shrink-0">
          <Cell w="w-[79px]" t="273 Tage 18:00" head small="text-[10.6px]" />
          <Cell w="w-[152px]" gray />
          <Cell w="w-[160px]" t="0,331454" />
        </div>
        <div className="h-[19px] flex shrink-0">
          <Cell w="w-[79px]" sel />
          <Cell w="w-[152px]" />
          <Cell w="w-[160px]" />
        </div>
      </div>
      <VScroll />
    </div>
    <HScroll thumb="left-[17px] w-[275px]" />
  </div>
);

export default function App() {
  return (
    <div className="w-[1882px] h-[1118px] overflow-hidden bg-[#f0f0f0] flex flex-col font-['Noto_Sans',sans-serif] text-[11.3px] text-[#1a1a1a]">
      {/* menu */}
      <div className="h-[24px] shrink-0 bg-white flex items-center pl-[8px] pt-[5px] gap-[14px] text-[11px] text-[#6a6a6a] border-b border-[#f0f0f0]">
        <span>Datei</span>
        <span>Bearbeiten</span>
        <span>Ansicht</span>
        <span>Methoden</span>
        <span>Extras</span>
        <span>Hilfe</span>
      </div>
      {/* toolbar 1 */}
      <div className="h-[25px] shrink-0 flex items-center pl-[1px] pt-[1px] border-t border-white border-b border-b-[#a8a8a8]">
        <ToolRow items={row1} />
      </div>
      {/* toolbar 2 */}
      <div className="h-[25px] shrink-0 flex items-center pl-[1px]">
        <ToolRow items={row2} />
        <div className="h-[23px] flex items-center gap-[1px] bg-[#e4e4e4] px-[3px] border-l border-[#b8b8b8]">
          <div className="w-[99px] h-[16px] bg-[#cc2029] border border-black" />
          <Dots />
          <div className="ml-[3px] w-[19px] h-[17px] border-[1.5px] border-[#555] bg-white flex items-center justify-center"><div className="w-[12px] h-[12px] bg-black" /></div>
          <Dots />
          <div className="w-[79px] h-[19px] bg-white border border-[#adadad] flex items-center justify-between pl-[5px] pr-[3px] text-[#222]">
            <span>0.1</span>
            <ChevronDown size={13} className="text-[#555]" />
          </div>
          <div className="w-[20px] h-[18px] bg-white border border-[#adadad] flex items-center justify-center"><Ico n="bars" s={15} /></div>
          <Dots />
        </div>
      </div>
      {/* main */}
      <div className="flex-1 flex min-h-0 bg-[#e4e4e4] pb-[3px]">
        {/* left column */}
        <div className="ml-[2px] w-[215px] shrink-0 pt-[2px] flex flex-col border-r-[3px] border-r-[#a8a8a8] box-content">
          <div className="h-[516px] shrink-0 flex flex-col bg-white border-l border-b border-[#a8a8a8]">
            <PanelHead title="Project Explorer" blue />
            <div className="flex-1 pt-[2px] overflow-hidden">
              <TreeRow pad="pl-[10px]" icon={<Book />} text="Geöffnete Projekte" lines={[`${H} left-[4px] w-[6px]`, `${V} left-[18px] top-[14px] h-[14px]`]} exp="left-[-5px]" />
              <TreeRow pad="pl-[30px]" icon={<Gfal />} text="GFal" lines={[`${H} left-[22px] w-[8px]`, `${V} left-[39px] top-[14px] h-[32px]`]} exp="left-[14px]" />
              <TreeRow pad="pl-[48px]" icon={<Series />} text="Lufttemperatur" lines={[`${H} left-[39px] w-[9px]`]} />
              <TreeRow pad="pl-[48px]" icon={<Series />} text="Wärmebedarf" hl lines={[`${H} left-[39px] w-[9px]`]} />
              <TreeRow pad="pl-[10px]" icon={<Book />} text="Temporäre Zeitreihen" lines={[`${H} left-[4px] w-[6px]`, `${V} left-[18px] top-[14px] h-[32px]`]} exp="left-[-5px]" />
              <TreeRow pad="pl-[29px]" icon={<Series />} text="KK_negative_Verschiebung" lines={[`${H} left-[18px] w-[11px]`]} />
              <TreeRow pad="pl-[29px]" icon={<Series />} text="KK_positive_Verschiebung" lines={[`${H} left-[18px] w-[11px]`]} />
            </div>
            <HScroll thumb="left-[26px] w-[124px]" />
            <div className="h-[2px] shrink-0 bg-[#f0f0f0]" />
          </div>
          <div className="h-[5px] shrink-0" />
          <div className="flex-1 flex flex-col bg-white border-l border-b border-[#a8a8a8] min-h-0">
            <PanelHead title="Plot-Manager" />
            <div className="flex-1 pt-[2px] overflow-hidden">
              <TreeRow pad="pl-[23px]" icon={<PlotIco />} text="Plot-Fenster 1" lines={[`${H} left-[16px] w-[7px]`, `${V} left-[12px] top-[14px] h-[58px]`, `${V} left-[31px] top-[14px] h-[32px]`]} exp="left-[8px]" />
              <TreeRow pad="pl-[42px]" icon={<Series />} text="KK_positive_Verschiebung" bold lines={[`${H} left-[31px] w-[11px]`]} />
              <TreeRow pad="pl-[42px]" icon={<Series />} text="KK_negative_Verschiebung" hl lines={[`${H} left-[31px] w-[11px]`]} />
              <TreeRow pad="pl-[23px]" icon={<PlotIco />} text="Plot-Fenster 2" lines={[`${H} left-[16px] w-[7px]`, `${V} left-[31px] top-[14px] h-[32px]`]} exp="left-[8px]" />
              <TreeRow pad="pl-[42px]" icon={<Series />} text="Lufttemperatur" lines={[`${H} left-[31px] w-[11px]`]} />
              <TreeRow pad="pl-[42px]" icon={<Series />} text="Wärmebedarf" bold lines={[`${H} left-[31px] w-[11px]`]} />
            </div>
            <HScroll thumb="left-[16px] w-[176px]" />
            <div className="h-[2px] shrink-0 bg-[#f0f0f0]" />
          </div>
        </div>
        {/* center column */}
        <div className="ml-[4px] w-[1288px] shrink-0 flex flex-col border-l border-[#b0b0b0]">
          <PlotTabs title="Plot-Fenster 2" tall />
          <div className="h-[485px] shrink-0 bg-white"><Chart2 /></div>
          <div className="h-[3px] shrink-0 bg-[#c8c8c8]" />
          <PlotTabs title="Plot-Fenster 1" bold />
          <div className="flex-1 min-h-0 bg-white overflow-hidden"><Chart1 /></div>
        </div>
        {/* right column */}
        <div className="ml-[5px] w-[363px] shrink-0 pt-[1px] flex flex-col">
          <div className="h-[517px] shrink-0 flex flex-col border-l border-r border-b border-[#a8a8a8] bg-white">
            <PanelHead title="Wertetabelle1" />
            <div className="bg-[#f0f0f0]"><TableTools /></div>
            <Table1 />
          </div>
          <div className="h-[5px] shrink-0" />
          <div className="flex-1 flex flex-col border-l border-r border-b border-[#a8a8a8] bg-white min-h-0">
            <PanelHead title="Wertetabelle2" />
            <div className="bg-[#f0f0f0]"><TableTools muted /></div>
            <Table2 />
          </div>
        </div>
      </div>
    </div>
  );
}
